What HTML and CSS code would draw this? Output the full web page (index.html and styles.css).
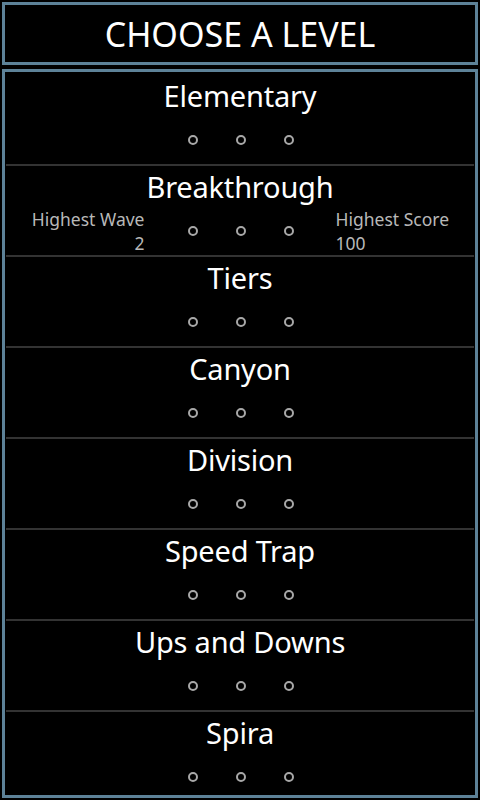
FILE: index.html
```html
<!DOCTYPE html>
<html lang="en">
<head>
  <meta charset="UTF-8">
  <meta name="viewport" content="width=device-width, initial-scale=1.0">
  <title>Choose a Level</title>
  <link rel="stylesheet" href="styles.css">
</head>
<body>
  <div class="screen">
    <div class="header">CHOOSE A LEVEL</div>

    <div class="levels">
      <div class="level">
        <div class="level-name">Elementary</div>
        <div class="level-info">
          <div class="stat left"></div>
          <div class="dots"><span class="dot"></span><span class="dot"></span><span class="dot"></span></div>
          <div class="stat right"></div>
        </div>
      </div>
      <div class="divider"></div>

      <div class="level">
        <div class="level-name">Breakthrough</div>
        <div class="level-info">
          <div class="stat left">Highest Wave<br>2</div>
          <div class="dots"><span class="dot"></span><span class="dot"></span><span class="dot"></span></div>
          <div class="stat right">Highest Score<br>100</div>
        </div>
      </div>
      <div class="divider"></div>

      <div class="level">
        <div class="level-name">Tiers</div>
        <div class="level-info">
          <div class="stat left"></div>
          <div class="dots"><span class="dot"></span><span class="dot"></span><span class="dot"></span></div>
          <div class="stat right"></div>
        </div>
      </div>
      <div class="divider"></div>

      <div class="level">
        <div class="level-name">Canyon</div>
        <div class="level-info">
          <div class="stat left"></div>
          <div class="dots"><span class="dot"></span><span class="dot"></span><span class="dot"></span></div>
          <div class="stat right"></div>
        </div>
      </div>
      <div class="divider"></div>

      <div class="level">
        <div class="level-name">Division</div>
        <div class="level-info">
          <div class="stat left"></div>
          <div class="dots"><span class="dot"></span><span class="dot"></span><span class="dot"></span></div>
          <div class="stat right"></div>
        </div>
      </div>
      <div class="divider"></div>

      <div class="level">
        <div class="level-name">Speed Trap</div>
        <div class="level-info">
          <div class="stat left"></div>
          <div class="dots"><span class="dot"></span><span class="dot"></span><span class="dot"></span></div>
          <div class="stat right"></div>
        </div>
      </div>
      <div class="divider"></div>

      <div class="level">
        <div class="level-name">Ups and Downs</div>
        <div class="level-info">
          <div class="stat left"></div>
          <div class="dots"><span class="dot"></span><span class="dot"></span><span class="dot"></span></div>
          <div class="stat right"></div>
        </div>
      </div>
      <div class="divider"></div>

      <div class="level">
        <div class="level-name">Spira</div>
        <div class="level-info">
          <div class="stat left"></div>
          <div class="dots"><span class="dot"></span><span class="dot"></span><span class="dot"></span></div>
          <div class="stat right"></div>
        </div>
      </div>
    </div>
  </div>
</body>
</html>
```

FILE: styles.css
```css
body {
  margin: 0;
  background-color: #000;
  color: #fff;
  font-family: 'Noto Sans', 'Open Sans', sans-serif;
}

.screen {
  height: 800px;
  padding: 2px;
  box-sizing: border-box;
  display: flex;
  flex-direction: column;
  gap: 4px;
}

.header {
  height: 63px;
  box-sizing: border-box;
  border: 3px solid #5d8298;
  text-align: center;
  font-size: 34px;
  line-height: 58px;
}

.levels {
  flex: 1;
  min-height: 0;
  border: 3px solid #5d8298;
  padding-top: 3px;
  overflow: hidden;
}

.level {
  height: 89px;
  box-sizing: border-box;
  padding-top: 3px;
}

.level-name {
  height: 35px;
  font-size: 29px;
  line-height: 36px;
  letter-spacing: -0.2px;
  text-align: center;
}

.level-info {
  margin-top: 3px;
  height: 48px;
  display: grid;
  grid-template-columns: 1fr auto 1fr;
  align-items: center;
}

.stat {
  font-size: 17.5px;
  line-height: 24px;
  color: #b8b8b8;
}

.stat.left {
  text-align: right;
}

.stat.right {
  text-align: left;
}

.dots {
  display: flex;
  gap: 38px;
  margin: 0 42px 0 43px;
}

.dot {
  width: 10px;
  height: 10px;
  box-sizing: border-box;
  border: 2px solid #a8a8a8;
  border-radius: 50%;
}

.divider {
  height: 2px;
  margin: 0 1px;
  background: #333;
}
```
